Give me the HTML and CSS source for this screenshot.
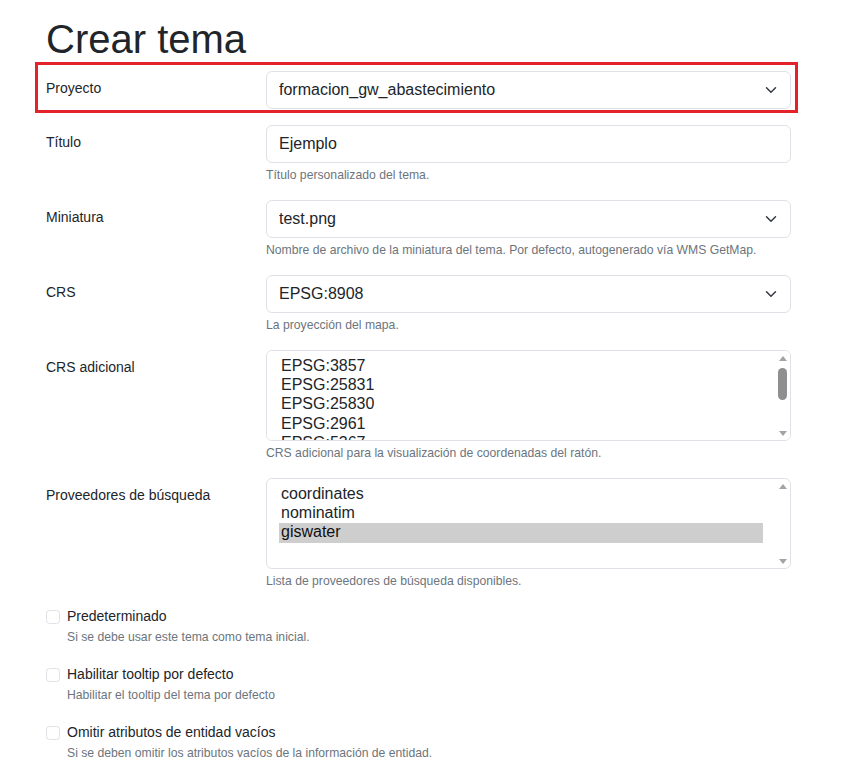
FILE: index.html
```html
<!DOCTYPE html>
<html lang="es">
<head>
    <meta charset="UTF-8">
    <meta name="viewport" content="width=device-width, initial-scale=1.0">
    <title>Crear tema</title>
    <link rel="stylesheet" href="styles.css">
</head>
<body>
    <main class="page">
        <h1 class="page-title">Crear tema</h1>

        <form class="theme-form">
            <div class="form-row form-row--marked">
                <label class="form-label" for="project">Proyecto</label>
                <div class="form-field">
                    <div class="select-wrap">
                        <select id="project" class="form-select">
                            <option>formacion_gw_abastecimiento</option>
                        </select>
                        <svg class="select-chevron" viewBox="0 0 16 16" aria-hidden="true">
                            <path d="m2 5 6 6 6-6"/>
                        </svg>
                    </div>
                </div>
            </div>

            <div class="form-row">
                <label class="form-label" for="title">Título</label>
                <div class="form-field">
                    <input id="title" class="form-control" type="text" value="Ejemplo">
                    <div class="form-text">Título personalizado del tema.</div>
                </div>
            </div>

            <div class="form-row">
                <label class="form-label" for="thumbnail">Miniatura</label>
                <div class="form-field">
                    <div class="select-wrap">
                        <select id="thumbnail" class="form-select">
                            <option>test.png</option>
                        </select>
                        <svg class="select-chevron" viewBox="0 0 16 16" aria-hidden="true">
                            <path d="m2 5 6 6 6-6"/>
                        </svg>
                    </div>
                    <div class="form-text">Nombre de archivo de la miniatura del tema. Por defecto, autogenerado vía WMS GetMap.</div>
                </div>
            </div>

            <div class="form-row">
                <label class="form-label" for="crs">CRS</label>
                <div class="form-field">
                    <div class="select-wrap">
                        <select id="crs" class="form-select">
                            <option>EPSG:8908</option>
                        </select>
                        <svg class="select-chevron" viewBox="0 0 16 16" aria-hidden="true">
                            <path d="m2 5 6 6 6-6"/>
                        </svg>
                    </div>
                    <div class="form-text">La proyección del mapa.</div>
                </div>
            </div>

            <div class="form-row">
                <label class="form-label" for="extra-crs">CRS adicional</label>
                <div class="form-field">
                    <div class="listbox">
                        <select id="extra-crs" class="form-select form-select--list" multiple>
                            <option>EPSG:3857</option>
                            <option>EPSG:25831</option>
                            <option>EPSG:25830</option>
                            <option>EPSG:2961</option>
                            <option>EPSG:5367</option>
                            <option>EPSG:4326</option>
                            <option>EPSG:32631</option>
                            <option>EPSG:23031</option>
                            <option>EPSG:2154</option>
                            <option>EPSG:3395</option>
                        </select>
                        <div class="scrollbar" aria-hidden="true">
                            <span class="scroll-arrow scroll-arrow--up"></span>
                            <span class="scroll-thumb"></span>
                            <span class="scroll-arrow scroll-arrow--down"></span>
                        </div>
                    </div>
                    <div class="form-text">CRS adicional para la visualización de coordenadas del ratón.</div>
                </div>
            </div>

            <div class="form-row">
                <label class="form-label" for="providers">Proveedores de búsqueda</label>
                <div class="form-field">
                    <div class="listbox">
                        <select id="providers" class="form-select form-select--list" multiple>
                            <option>coordinates</option>
                            <option>nominatim</option>
                            <option selected>giswater</option>
                        </select>
                        <div class="scrollbar" aria-hidden="true">
                            <span class="scroll-arrow scroll-arrow--up"></span>
                            <span class="scroll-arrow scroll-arrow--down"></span>
                        </div>
                    </div>
                    <div class="form-text">Lista de proveedores de búsqueda disponibles.</div>
                </div>
            </div>

            <div class="form-check">
                <input id="default-theme" class="form-check-input" type="checkbox">
                <div class="form-check-body">
                    <label class="form-check-label" for="default-theme">Predeterminado</label>
                    <div class="form-text form-text--check">Si se debe usar este tema como tema inicial.</div>
                </div>
            </div>

            <div class="form-check">
                <input id="tooltip" class="form-check-input" type="checkbox">
                <div class="form-check-body">
                    <label class="form-check-label" for="tooltip">Habilitar tooltip por defecto</label>
                    <div class="form-text form-text--check">Habilitar el tooltip del tema por defecto</div>
                </div>
            </div>

            <div class="form-check">
                <input id="skip-empty" class="form-check-input" type="checkbox">
                <div class="form-check-body">
                    <label class="form-check-label" for="skip-empty">Omitir atributos de entidad vacíos</label>
                    <div class="form-text form-text--check">Si se deben omitir los atributos vacíos de la información de entidad.</div>
                </div>
            </div>
        </form>
    </main>
</body>
</html>
```

FILE: styles.css
```css
/* === BASE === */
* {
    margin: 0;
    padding: 0;
    box-sizing: border-box;
}

:root {
    --text: #212529;
    --muted: #6c757d;
    --border: #dee2e6;
    --radius: 6px;
    --marker: #e3222a;
    --scroll-arrow: #a3a3a3;
    --scroll-thumb: #8f8f8f;
}

body {
    font-family: "Liberation Sans", Arial, sans-serif;
    font-size: 16px;
    line-height: 1.5;
    color: var(--text);
    background: #fff;
}

.page {
    width: 745px;
    margin-left: 46px;
    padding-top: 15px;
}

.page-title {
    font-size: 40px;
    font-weight: 400;
    line-height: 1.2;
    margin-bottom: 8px;
}

/* === FILAS DEL FORMULARIO === */
.form-row {
    display: grid;
    grid-template-columns: 220px 1fr;
    margin-bottom: 16px;
}

/* recuadro rojo de anotación sobre la fila del proyecto */
.form-row--marked {
    position: relative;
}

.form-row--marked::after {
    content: "";
    position: absolute;
    top: -9px;
    left: -11px;
    right: -7px;
    bottom: -4px;
    border: 3px solid var(--marker);
    pointer-events: none;
}

.form-label {
    font-size: 14px;
    line-height: 21px;
    padding-top: 7px;
}

.form-field {
    min-width: 0;
}

.form-control,
.form-select {
    display: block;
    width: 100%;
    height: 38px;
    padding: 6px 12px;
    font-family: inherit;
    font-size: 16px;
    line-height: 24px;
    color: var(--text);
    background: #fff;
    border: 1px solid var(--border);
    border-radius: var(--radius);
    outline: none;
}

.select-wrap {
    position: relative;
}

.form-select {
    appearance: none;
    -webkit-appearance: none;
    padding-right: 36px;
}

.select-chevron {
    position: absolute;
    right: 12px;
    top: 50%;
    width: 16px;
    height: 12px;
    transform: translateY(-50%);
    fill: none;
    stroke: #343a40;
    stroke-width: 2;
    stroke-linecap: round;
    stroke-linejoin: round;
    pointer-events: none;
}

/* === LISTAS DE SELECCIÓN MÚLTIPLE === */
.listbox {
    position: relative;
}

.form-select--list {
    height: 91px;
    padding: 6px 27px 6px 12px;
    overflow-y: auto;
    scrollbar-width: none;
}

.form-select--list option {
    padding: 0 2px 1px;
    line-height: normal;
}

/* barra de desplazamiento clásica dibujada encima */
.scrollbar {
    position: absolute;
    top: 1px;
    right: 1px;
    bottom: 1px;
    width: 15px;
    display: flex;
    flex-direction: column;
    align-items: center;
    padding: 5px 0 4px;
    background: #fff;
    border-radius: 0 var(--radius) var(--radius) 0;
    pointer-events: none;
}

.scroll-arrow {
    width: 0;
    height: 0;
    border-left: 4.5px solid transparent;
    border-right: 4.5px solid transparent;
}

.scroll-arrow--up {
    border-bottom: 5px solid var(--scroll-arrow);
}

.scroll-arrow--down {
    margin-top: auto;
    border-top: 5px solid var(--scroll-arrow);
}

.scroll-thumb {
    width: 9px;
    height: 32px;
    margin-top: 7px;
    border-radius: 5px;
    background: var(--scroll-thumb);
}

.form-text {
    margin-top: 4px;
    font-size: 12.2px;
    line-height: 17px;
    color: var(--muted);
}

/* === CASILLAS === */
.form-check {
    display: flex;
    align-items: flex-start;
    margin-bottom: 18px;
}

.form-check-input {
    appearance: none;
    -webkit-appearance: none;
    flex: none;
    width: 14px;
    height: 14px;
    margin-top: 4px;
    margin-right: 7px;
    border: 1px solid var(--border);
    border-radius: 3.5px;
    background: #fff;
}

.form-check-label {
    display: block;
    font-size: 14px;
    line-height: 21px;
}

.form-text--check {
    margin-top: 2px;
}
```
